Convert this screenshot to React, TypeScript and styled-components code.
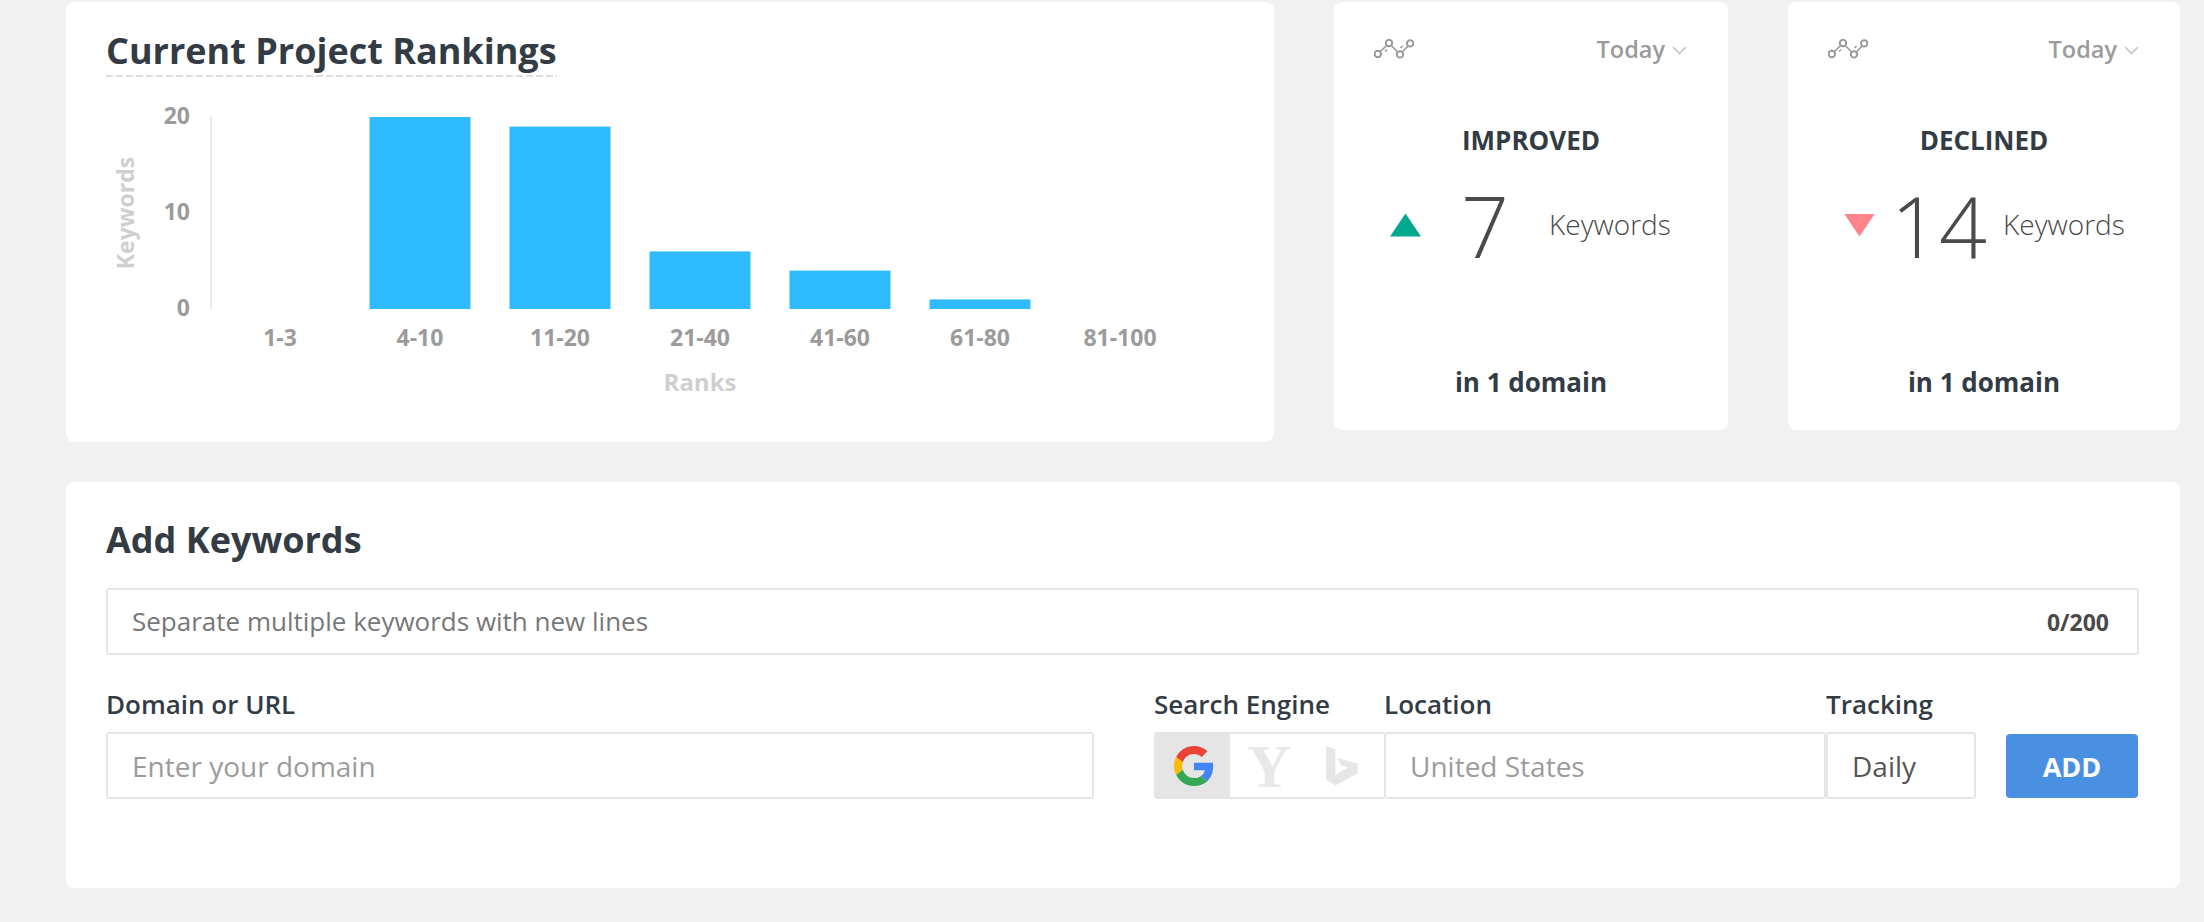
import React from 'react';
import styled, { createGlobalStyle } from 'styled-components';

const GlobalStyle = createGlobalStyle`
  html, body {
    margin: 0;
    padding: 0;
    background: #f1f1f1;
    font-family: 'Open Sans', 'Liberation Sans', sans-serif;
    overflow: hidden;
  }
  * { box-sizing: border-box; }
`;

const ranks = [
  { label: '1-3', value: 0 },
  { label: '4-10', value: 20 },
  { label: '11-20', value: 19 },
  { label: '21-40', value: 6 },
  { label: '41-60', value: 4 },
  { label: '61-80', value: 1 },
  { label: '81-100', value: 0 },
];

const RankChart = () => {
  const base = 219;
  return (
    <ChartSvg viewBox="0 0 1128 320">
      <line x1="105" y1="27" x2="105" y2={base} stroke="#e2e2e2" strokeWidth="1.5" />
      {[20, 10, 0].map((tick) => (
        <AxisText key={tick} x="84" y={base - tick * 9.6 + 7} textAnchor="end">
          {tick}
        </AxisText>
      ))}
      <TitleText x="20" y="123" transform="rotate(-90 20 123)" textAnchor="middle" dy="8">
        Keywords
      </TitleText>
      {ranks.map((r, i) => {
        const cx = 174 + 140 * i;
        return (
          <g key={r.label}>
            {r.value > 0 && (
              <rect x={cx - 50.5} y={base - r.value * 9.6} width="101" height={r.value * 9.6} fill="#2ebaff" />
            )}
            <AxisText x={cx} y="256" textAnchor="middle">
              {r.label}
            </AxisText>
          </g>
        );
      })}
      <TitleText x="594" y="301" textAnchor="middle" $wide>
        Ranks
      </TitleText>
    </ChartSvg>
  );
};

const TrendIcon = () => (
  <svg width="40" height="20" viewBox="0 0 40 20" fill="none" stroke="#999" strokeWidth="2">
    <circle cx="3.8" cy="15" r="3.2" />
    <circle cx="15" cy="4" r="3.2" />
    <circle cx="26" cy="15.4" r="3.2" />
    <circle cx="36.2" cy="4.4" r="3.2" />
    <path d="M6.5 12.5 L12.5 6.5 M17.3 6.5 L23.6 13 M28.4 13 L34 7" strokeWidth="1.6" />
    <path d="M11 12.5 L13 10.5 M26.5 9 L28.5 7" strokeWidth="1.6" />
  </svg>
);

const Chevron = () => (
  <svg width="15" height="9" viewBox="0 0 15 9" fill="none" stroke="#c4c4c4" strokeWidth="1.6">
    <path d="M1 1 L7.5 7.5 L14 1" />
  </svg>
);

const GoogleIcon = () => (
  <svg width="40" height="40" viewBox="0 0 48 48">
    <path fill="#EA4335" d="M24 9.5c3.54 0 6.71 1.22 9.21 3.6l6.85-6.85C35.9 2.38 30.47 0 24 0 14.62 0 6.51 5.38 2.56 13.22l7.98 6.19C12.43 13.72 17.74 9.5 24 9.5z" />
    <path fill="#4285F4" d="M46.98 24.55c0-1.57-.15-3.09-.38-4.55H24v9.02h12.94c-.58 2.96-2.26 5.48-4.78 7.18l7.73 6c4.51-4.18 7.09-10.36 7.09-17.65z" />
    <path fill="#FBBC05" d="M10.53 28.59c-.48-1.45-.76-2.99-.76-4.59s.27-3.14.76-4.59l-7.98-6.19C.92 16.46 0 20.12 0 24c0 3.88.92 7.54 2.56 10.78l7.97-6.19z" />
    <path fill="#34A853" d="M24 48c6.48 0 11.93-2.13 15.89-5.81l-7.73-6c-2.15 1.45-4.92 2.3-8.16 2.3-6.26 0-11.57-4.22-13.47-9.91l-7.98 6.19C6.51 42.62 14.62 48 24 48z" />
  </svg>
);

const BingIcon = () => (
  <svg width="32" height="40" viewBox="0 0 31 39">
    <path fill="#e6e6e6" d="M0 0 L9 3.3 V28.3 L21.3 21.3 L14 18.3 L11.3 11.7 L30.7 16.7 V26.7 L9 38.5 L0 32.3 Z" />
  </svg>
);

const StatCard = ({ title, count, up, width }: { title: string; count: number; up: boolean; width: number }) => (
  <Stat $width={width}>
    <StatHeader>
      <TrendIcon />
      <Period>
        Today
        <Chevron />
      </Period>
    </StatHeader>
    <StatTitle>{title}</StatTitle>
    <StatRow>
      <Triangle $up={up} />
      <Count>{count}</Count>
      <CountLabel>Keywords</CountLabel>
    </StatRow>
    <StatFoot>in 1 domain</StatFoot>
  </Stat>
);

export default function App() {
  return (
    <Page>
      <GlobalStyle />
      <TopRow>
        <ChartCard>
          <Heading>
            <Underlined>Current Project Rankings</Underlined>
          </Heading>
          <RankChart />
        </ChartCard>
        <StatCard title="IMPROVED" count={7} up width={394} />
        <StatCard title="DECLINED" count={14} up={false} width={392} />
      </TopRow>
      <FormCard>
        <Heading>Add Keywords</Heading>
        <KeywordBox>
          <Placeholder>Separate multiple keywords with new lines</Placeholder>
          <Counter>0/200</Counter>
        </KeywordBox>
        <FormRow>
          <Field $width={988} $gap={60}>
            <Label>Domain or URL</Label>
            <InputBox>Enter your domain</InputBox>
          </Field>
          <Field $width={230}>
            <Label>Search Engine</Label>
            <EngineBox>
              <EngineTile $active>
                <GoogleIcon />
              </EngineTile>
              <EngineTile>
                <YahooMark>Y</YahooMark>
              </EngineTile>
              <BingTile>
                <BingIcon />
              </BingTile>
            </EngineBox>
          </Field>
          <Field $width={442}>
            <Label>Location</Label>
            <InputBox>United States</InputBox>
          </Field>
          <Field $width={150} $gap={30}>
            <Label>Tracking</Label>
            <InputBox $filled>Daily</InputBox>
          </Field>
          <AddButton>ADD</AddButton>
        </FormRow>
      </FormCard>
    </Page>
  );
}

const Page = styled.div`
  width: 2204px;
  height: 922px;
  padding: 2px 24px 0 66px;
`;

const TopRow = styled.div`
  display: flex;
  align-items: flex-start;
  gap: 60px;
`;

const Card = styled.div`
  background: #fff;
  border-radius: 8px;
`;

const ChartCard = styled(Card)`
  width: 1208px;
  height: 440px;
  padding: 25px 40px 0;
`;

const Heading = styled.h2`
  margin: 0;
  font-size: 36px;
  line-height: 48px;
  font-weight: 700;
  color: #333b45;
`;

const Underlined = styled.span`
  display: inline-block;
  padding-bottom: 2px;
  background: repeating-linear-gradient(90deg, #dcdcdc 0 7px, transparent 7px 10px) left bottom / 100% 2px no-repeat;
`;

const ChartSvg = styled.svg`
  display: block;
  width: 1128px;
  height: 320px;
  margin-top: 13px;
  font-family: 'Open Sans', sans-serif;
`;

const AxisText = styled.text`
  font-size: 23px;
  font-weight: 700;
  fill: #9b9b9b;
`;

const TitleText = styled.text<{ $wide?: boolean }>`
  font-size: ${({ $wide }) => ($wide ? 24 : 23)}px;
  font-weight: 700;
  fill: #cfcfcf;
`;

const Stat = styled(Card)<{ $width: number }>`
  width: ${({ $width }) => $width}px;
  height: 428px;
  display: flex;
  flex-direction: column;
  padding: 37px 41px 0 40px;
`;

const StatHeader = styled.div`
  display: flex;
  justify-content: space-between;
  align-items: center;
  height: 20px;
`;

const Period = styled.div`
  display: flex;
  align-items: center;
  gap: 7px;
  font-size: 23.5px;
  font-weight: 600;
  color: #9b9b9b;

  svg {
    margin-top: 2px;
  }
`;

const StatTitle = styled.div`
  margin-top: 64px;
  margin-left: -40px;
  margin-right: -41px;
  text-align: center;
  font-size: 26px;
  line-height: 34px;
  font-weight: 700;
  color: #333b45;
`;

const StatRow = styled.div`
  display: grid;
  grid-template-columns: 31px 129px auto;
  align-items: center;
  height: 84px;
  margin-top: 27px;
  margin-left: 16px;
`;

const Triangle = styled.div<{ $up: boolean }>`
  width: 31px;
  height: 23px;
  margin-top: -2px;
  background: ${({ $up }) => ($up ? '#00a88f' : '#ff848c')};
  clip-path: ${({ $up }) =>
    $up ? 'polygon(50% 0, 100% 100%, 0 100%)' : 'polygon(0 0, 100% 0, 50% 100%)'};
`;

const Count = styled.div`
  text-align: center;
  margin-left: -1px;
  font-size: 84px;
  line-height: 84px;
  font-weight: 300;
  color: #4a4a4a;
`;

const CountLabel = styled.div`
  font-size: 28px;
  font-weight: 300;
  color: #4a4a4a;
  margin-top: -4px;
  margin-left: -1px;
`;

const StatFoot = styled.div`
  margin-top: 97px;
  margin-left: -40px;
  margin-right: -41px;
  text-align: center;
  font-size: 26px;
  line-height: 34px;
  font-weight: 700;
  color: #333b45;
`;

const FormCard = styled(Card)`
  margin-top: 40px;
  height: 406px;
  padding: 34px 41px 0 40px;
`;

const boxBase = `
  border: 2px solid #e5e5e5;
  border-radius: 3px;
  height: 67px;
  display: flex;
  align-items: center;
`;

const KeywordBox = styled.div`
  ${boxBase}
  margin-top: 24px;
  justify-content: space-between;
  padding: 0 28px 0 24px;
  font-size: 26px;
  color: #777;
`;

const Placeholder = styled.span`
  margin-top: -2px;
`;

const Counter = styled.span`
  font-size: 23px;
  font-weight: 700;
  color: #4a4a4a;
`;

const FormRow = styled.div`
  display: flex;
  align-items: flex-end;
  margin-top: 32px;
`;

const Field = styled.div<{ $width: number; $gap?: number }>`
  width: ${({ $width }) => $width}px;
  margin-right: ${({ $gap }) => $gap ?? 0}px;
  flex: none;
`;

const Label = styled.div`
  font-size: 26px;
  line-height: 34px;
  font-weight: 600;
  color: #333b45;
  margin-bottom: 11px;
`;

const InputBox = styled.div<{ $filled?: boolean }>`
  ${boxBase}
  padding-left: 24px;
  font-size: 28px;
  color: ${({ $filled }) => ($filled ? '#555' : '#9b9b9b')};
`;

const EngineBox = styled.div`
  ${boxBase}
  border-right: none;
  border-radius: 3px 0 0 3px;
  overflow: hidden;
  align-items: stretch;
`;

const EngineTile = styled.div<{ $active?: boolean }>`
  width: ${({ $active }) => ($active ? '74px' : '76px')};
  padding-left: 2px;
  display: flex;
  align-items: center;
  justify-content: center;
  background: ${({ $active }) => ($active ? '#e5e5e5' : '#fff')};
`;

const BingTile = styled(EngineTile)`
  padding: 0 5px 0 0;
`;

const YahooMark = styled.span`
  font-family: 'Liberation Serif', serif;
  font-weight: 700;
  font-size: 61px;
  line-height: 40px;
  color: #e8e8e8;
  margin-top: 3px;
`;

const AddButton = styled.button`
  flex: none;
  width: 132px;
  height: 64px;
  margin-bottom: 1px;
  border: none;
  border-radius: 4px;
  background: #4a90e2;
  color: #fff;
  font-family: 'Open Sans', sans-serif;
  font-size: 27px;
  font-weight: 700;
`;
